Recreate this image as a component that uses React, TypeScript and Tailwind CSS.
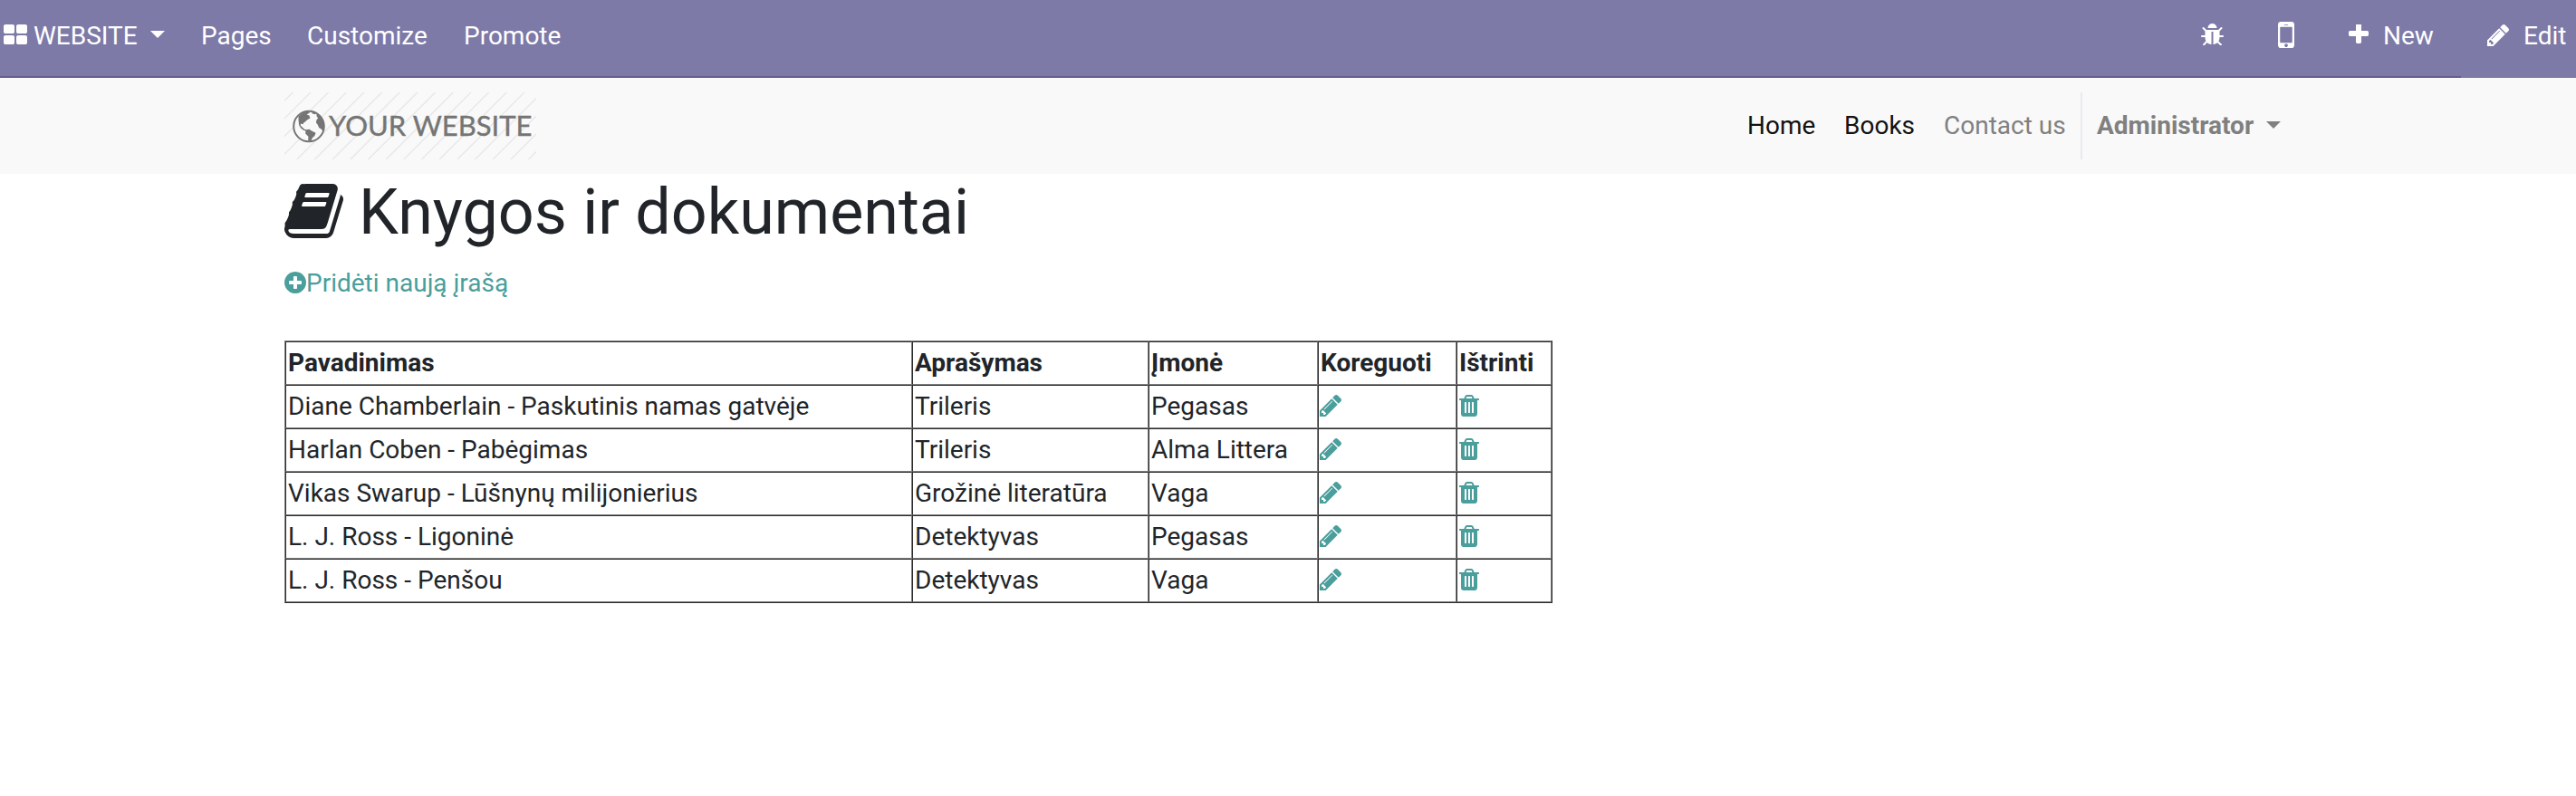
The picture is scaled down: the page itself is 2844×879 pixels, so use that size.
import React from "react";

type IconProps = { d: string; box: string; className: string };

function Icon({ d, box, className }: IconProps) {
  return (
    <svg viewBox={box} className={"block shrink-0 " + className} fill="currentColor" aria-hidden="true" preserveAspectRatio="none">
      <path d={d} />
    </svg>
  );
}

const thLarge =
  "M832 1024v384q0 52-38 90t-90 38h-512q-52 0-90-38t-38-90v-384q0-52 38-90t90-38h512q52 0 90 38t38 90zm0-768v384q0 52-38 90t-90 38h-512q-52 0-90-38t-38-90v-384q0-52 38-90t90-38h512q52 0 90 38t38 90zm896 768v384q0 52-38 90t-90 38h-512q-52 0-90-38t-38-90v-384q0-52 38-90t90-38h512q52 0 90 38t38 90zm0-768v384q0 52-38 90t-90 38h-512q-52 0-90-38t-38-90v-384q0-52 38-90t90-38h512q52 0 90 38t38 90z";
const pencil =
  "M491 1536l91-91-235-235-91 91v107h128v128h107zm523-928q0-22-22-22-10 0-17 7l-542 542q-7 7-7 17 0 22 22 22 10 0 17-7l542-542q7-7 7-17zm-54-192l416 416-832 832h-416v-416zm683 96q0 53-37 90l-166 166-416-416 166-165q36-38 90-38 53 0 91 38l235 234q37 39 37 91z";
const trash =
  "M704 1376v-704q0-14-9-23t-23-9h-64q-14 0-23 9t-9 23v704q0 14 9 23t23 9h64q14 0 23-9t9-23zm256 0v-704q0-14-9-23t-23-9h-64q-14 0-23 9t-9 23v704q0 14 9 23t23 9h64q14 0 23-9t9-23zm256 0v-704q0-14-9-23t-23-9h-64q-14 0-23 9t-9 23v704q0 14 9 23t23 9h64q14 0 23-9t9-23zm-544-992h448l-48-117q-7-9-17-11h-317q-10 2-17 11zm928 32v64q0 14-9 23t-23 9h-96v948q0 83-47 143.5t-113 60.5h-832q-66 0-113-58.5t-47-141.5v-952h-96q-14 0-23-9t-9-23v-64q0-14 9-23t23-9h309l70-167q15-37 54-63t79-26h320q40 0 79 26t54 63l70 167h309q14 0 23 9t9 23z";
const plusCircle =
  "M1344 960v-128q0-26-19-45t-45-19h-256v-256q0-26-19-45t-45-19h-128q-26 0-45 19t-19 45v256h-256q-26 0-45 19t-19 45v128q0 26 19 45t45 19h256v256q0 26 19 45t45 19h128q26 0 45-19t19-45v-256h256q26 0 45-19t19-45zm320-64q0 209-103 385.5t-279.5 279.5-385.5 103-385.5-103-279.5-279.5-103-385.5 103-385.5 279.5-279.5 385.5-103 385.5 103 279.5 279.5 103 385.5z";
const plus =
  "M1600 736v192q0 40-28 68t-68 28h-416v416q0 40-28 68t-68 28h-192q-40 0-68-28t-28-68v-416h-416q-40 0-68-28t-28-68v-192q0-40 28-68t68-28h416v-416q0-40 28-68t68-28h192q40 0 68 28t28 68v416h416q40 0 68 28t28 68z";
const bug =
  "M1696 960q0 26-19 45t-45 19h-224q0 171-67 290l208 209q19 19 19 45t-19 45q-18 19-45 19t-45-19l-198-197q-5 5-15 13t-42 28.5-65 36.5-82 29-97 13v-896h-128v896q-51 0-101.5-13.5t-87-33-66-39-43.5-32.5l-15-14-183 207q-20 21-48 21-24 0-43-16-19-18-20.5-44.5t15.5-46.5l202-227q-58-114-58-274h-224q-26 0-45-19t-19-45 19-45 45-19h224v-294l-173-173q-19-19-19-45t19-45 45-19 45 19l173 173h844l173-173q19-19 45-19t45 19 19 45-19 45l-173 173v294h224q26 0 45 19t19 45zm-480-576h-640q0-133 93.5-226.5t226.5-93.5 226.5 93.5 93.5 226.5z";
const mobile =
  "M976 1408q0-33-23.5-56.5t-56.5-23.5-56.5 23.5-23.5 56.5 23.5 56.5 56.5 23.5 56.5-23.5 23.5-56.5zm208-160v-704q0-13-9.5-22.5t-22.5-9.5h-512q-13 0-22.5 9.5t-9.5 22.5v704q0 13 9.5 22.5t22.5 9.5h512q13 0 22.5-9.5t9.5-22.5zm-192-848q0-16-16-16h-160q-16 0-16 16t16 16h160q16 0 16-16zm288-16v1024q0 52-38 90t-90 38h-512q-52 0-90-38t-38-90v-1024q0-52 38-90t90-38h512q52 0 90 38t38 90z";
const book =
  "M1703 478q40 57 18 129l-275 906q-19 64-76.5 107.5t-122.5 43.5h-923q-77 0-148.5-53.5t-99.5-131.5q-24-67-2-127 0-4 3-27t4-37q1-8-3-21.5t-3-19.5q2-11 8-21t16.5-23.5 16.5-23.5q23-38 45-91.5t30-91.5q3-10 .5-30t-.5-28q3-11 17-28t17-23q21-36 42-92t25-90q1-9-2.5-32t.5-28q4-13 22-30.5t22-22.5q19-26 42.5-84.5t27.5-96.5q1-8-3-25.5t-2-26.5q2-8 9-18t18-23 17-21q8-12 16.5-30.5t15-35 16-36 19.5-32 26.5-23.5 36-11.5 47.5 5.5l-1 3q38-9 51-9h761q74 0 114 56t18 130l-274 906q-36 119-71.5 153.5t-128.5 34.5h-869q-27 0-38 15-11 16-1 43 24 70 144 70h923q29 0 56-15.5t35-41.5l300-987q7-22 5-57 38 15 59 43zm-1064 2q-4 13 2 22.5t20 9.5h608q13 0 25.5-9.5t16.5-22.5l21-64q4-13-2-22.5t-20-9.5h-608q-13 0-25.5 9.5t-16.5 22.5zm-83 256q-4 13 2 22.5t20 9.5h608q13 0 25.5-9.5t16.5-22.5l21-64q4-13-2-22.5t-20-9.5h-608q-13 0-25.5 9.5t-16.5 22.5z";

function Caret() {
  return <span className="block size-0 border-x-[8px] border-t-[8px] border-x-transparent border-t-current" />;
}

function Logo() {
  const stripes = Array.from({ length: 19 }, (_, i) => 11.2 + (i - 1) * 19.67);
  return (
    <a className="relative flex h-[74px] w-[278px] items-center text-[#757575]">
      <svg viewBox="0 0 278 74" className="absolute inset-0 h-[74px] w-[278px]" aria-hidden="true">
        {stripes.map((s) => (
          <line key={s} x1={s} y1={-2} x2={s - 78} y2={76} stroke="#e8e8e8" strokeWidth="1.4" />
        ))}
      </svg>
      <svg viewBox="0 0 36 37" className="relative ml-[9px] h-[37px] w-9" aria-hidden="true">
        <circle cx="18" cy="18.5" r="16.8" fill="#f9f9f9" stroke="currentColor" strokeWidth="2" />
        <path
          fill="currentColor"
          d="M6.5 7.5L11 3.8 17 1.5 19 3.6 17 4.4 15.6 5.6 18.4 6.6 19.4 9.5 16 11.4 14.2 13.2 12.4 14.4 11.4 16.2 9.2 15.6 8.7 17.6 11 19.8 13.5 22 15 22 14.6 23.6 12.6 23 9.4 20.8 7.2 17.6 6.6 12.5zM14.6 22.2L18.5 21.8 21 23.6 25.6 25.8 24.2 29.2 22 31 20.5 34.4 17.2 34.6 17.4 29.8 14.2 26.4zM26.5 4L31 7.2 34.6 13.5 35 20 33.8 24 31.6 21.6 29.2 20 27.6 16.6 26 14.6 26.4 11.6 28.2 9.6 26.6 7.6zM21 2.4L26 3.4 24.8 5.2 22 4.4z"
        />
      </svg>
      <span className="relative mb-[2px] ml-[4px] whitespace-nowrap font-['Lato'] text-[31px] leading-[42px] [-webkit-text-stroke:0.4px_#757575]">YOUR WEBSITE</span>
    </a>
  );
}

const books = [
  ["Diane Chamberlain - Paskutinis namas gatvėje", "Trileris", "Pegasas"],
  ["Harlan Coben - Pabėgimas", "Trileris", "Alma Littera"],
  ["Vikas Swarup - Lūšnynų milijonierius", "Grožinė literatūra", "Vaga"],
  ["L. J. Ross - Ligoninė", "Detektyvas", "Pegasas"],
  ["L. J. Ross - Penšou", "Detektyvas", "Vaga"],
];

const cell =
  "h-12 border border-t-[#2b2b2b] border-l-[#2b2b2b] border-r-[#7f7f7f] border-b-[#7f7f7f] p-0 pl-[2px] text-left align-middle leading-[42px] whitespace-nowrap";

export default function App() {
  return (
    <div className="h-[879px] w-[2844px] overflow-hidden bg-white font-['Roboto',sans-serif] text-[28px] leading-[42px] text-[#212529]">
      <nav className="flex h-[86px] justify-between bg-[#7d7aa8] text-white">
        <div className="flex grow items-start border-b-2 border-[#655c92] pt-[19px]">
          <Icon d={thLarge} box="64 128 1664 1408" className="mt-2 ml-1 h-[22px] w-[26px]" />
          <span className="ml-[7px] w-[129px]">WEBSITE</span>
          <div className="mt-[15px]"><Caret /></div>
          <span className="ml-10 w-[117px]">Pages</span>
          <span className="w-[173px]">Customize</span>
          <span>Promote</span>
          <div className="ml-auto flex">
            <Icon d={bug} box="96 64 1600 1536" className="mt-[7px] h-6 w-[25px]" />
            <Icon d={mobile} box="512 256 768 1280" className="mt-[5px] ml-[60px] h-[29px] w-[18px]" />
            <Icon d={plus} box="192 192 1408 1408" className="mt-2 ml-[60px] size-[22px]" />
            <span className="ml-4 w-[86px]">New</span>
          </div>
        </div>
        <div className="flex w-[127px] items-start pt-[19px]">
          <Icon d={pencil} box="128 149 1515 1515" className="mt-2 ml-[29px] size-6" />
          <span className="ml-4">Edit</span>
        </div>
      </nav>

      <header className="flex h-[106px] items-center justify-between bg-[#f9f9f9] pr-[326px] pl-[314px]">
        <Logo />
        <div className="flex items-center text-[#808080]">
          <span className="w-[107px] text-[#121212]">Home</span>
          <span className="w-[110px] text-[#121212]">Books</span>
          <span className="w-[151px]">Contact us</span>
          <span className="h-[74px] w-[2px] bg-[#e9e9ef]" />
          <span className="ml-4 w-[187px] font-bold">Administrator</span>
          <div className="mb-[3px]"><Caret /></div>
        </div>
      </header>

      <main className="pl-[314px]">
        <h1 className="flex h-[84px] items-start text-[70px] leading-[84px]">
          <Icon d={book} box="64 128 1664 1536" className="mt-[11px] h-[60px] w-[65px]" />
          <span className="ml-[17px] whitespace-nowrap">Knygos ir dokumentai</span>
        </h1>
        <a className="mt-4 flex h-[42px] items-start text-[#4a9e9c]">
          <Icon d={plusCircle} box="128 128 1536 1536" className="mt-2 size-6" />
          <span>Pridėti naują įrašą</span>
        </a>
        <table className="mt-[42px] w-[1400px] table-fixed border-separate border-spacing-0 border border-t-[#7f7f7f] border-r-[#2b2b2b] border-b-[#2b2b2b] border-l-[#7f7f7f]">
          <colgroup>
            <col className="w-[692px]" />
            <col className="w-[261px]" />
            <col className="w-[187px]" />
            <col className="w-[153px]" />
            <col className="w-[105px]" />
          </colgroup>
          <thead>
            <tr className="font-bold">
              <th className={cell}>Pavadinimas</th>
              <th className={cell}>Aprašymas</th>
              <th className={cell}>Įmonė</th>
              <th className={cell}>Koreguoti</th>
              <th className={cell}>Ištrinti</th>
            </tr>
          </thead>
          <tbody>
            {books.map(([title, genre, company]) => (
              <tr key={title}>
                <td className={cell}>{title}</td>
                <td className={cell}>{genre}</td>
                <td className={cell}>{company}</td>
                <td className={cell}>
                  <Icon d={pencil} box="128 149 1515 1515" className="mb-0.5 -ml-px size-6 text-[#4a9e9c]" />
                </td>
                <td className={cell}>
                  <Icon d={trash} box="192 128 1408 1536" className="mb-0.5 h-6 w-[22px] text-[#4a9e9c]" />
                </td>
              </tr>
            ))}
          </tbody>
        </table>
      </main>
    </div>
  );
}
